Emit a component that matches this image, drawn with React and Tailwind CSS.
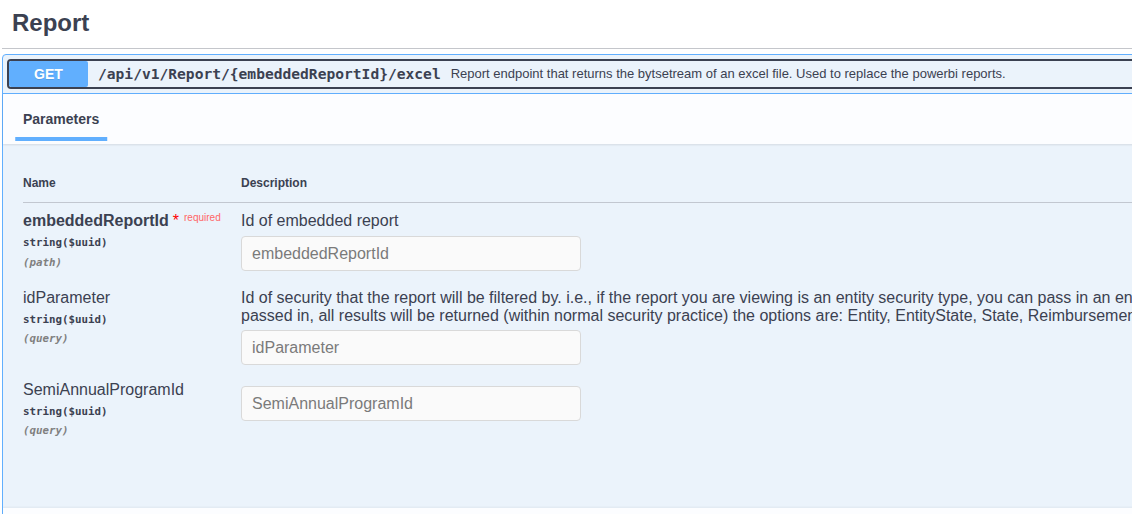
const sans = { fontFamily: '"Liberation Sans", Arial, sans-serif' };
const mono = { fontFamily: '"DejaVu Sans Mono", "Liberation Mono", monospace' };

const params = [
  {
    name: 'embeddedReportId',
    required: true,
    type: 'string($uuid)',
    location: '(path)',
    description: ['Id of embedded report'],
  },
  {
    name: 'idParameter',
    type: 'string($uuid)',
    location: '(query)',
    description: [
      'Id of security that the report will be filtered by. i.e., if the report you are viewing is an entity security type, you can pass in an entity id. If no id is',
      'passed in, all results will be returned (within normal security practice) the options are: Entity, EntityState, State, Reimbursement, Program',
    ],
  },
  {
    name: 'SemiAnnualProgramId',
    type: 'string($uuid)',
    location: '(query)',
    description: [],
  },
];

const rowTop = ['pt-[9px]', 'pt-[18px]', 'pt-[16px]'];

const ParamRow = ({ param, index }) => (
  <div className={`flex ${rowTop[index]}`}>
    <div className="w-[218px] shrink-0">
      <div className="flex items-start h-[18px]">
        <span
          className={`text-[16px] leading-[18px] text-[#3b4151] ${param.required ? 'font-bold' : ''}`}
          style={sans}
        >
          {param.name}
        </span>
        {param.required && (
          <>
            <span className="text-[16px] leading-[18px] text-[#ff0000] ml-[4px]" style={sans}>*</span>
            <span className="text-[10px] leading-[12px] text-[#ff6666] ml-[5px]" style={sans}>
              required
            </span>
          </>
        )}
      </div>
      <div className="mt-[5px] text-[10.8px] leading-[16px] font-bold text-[#3b4151]" style={mono}>
        {param.type}
      </div>
      <div
        className={`${index === 0 ? 'mt-[4px]' : 'mt-[3px]'} text-[10.8px] leading-[16px] font-bold italic text-[#808080]`}
        style={mono}
      >
        {param.location}
      </div>
    </div>
    <div className={`flex-1 ${param.description.length === 0 ? 'pt-[5px]' : ''}`}>
      {param.description.map((line) => (
        <div key={line} className="text-[16px] leading-[18px] text-[#3b4151] whitespace-nowrap" style={sans}>
          {line}
        </div>
      ))}
      {param.description.length > 0 && <div className={index === 0 ? 'h-[6px]' : 'h-[5px]'} />}
      <input
        placeholder={param.name}
        className="w-[340px] h-[35px] px-[10px] rounded-[4px] border border-[#d9d9d9] bg-[#fafafa] text-[16px] text-[#3b4151] placeholder:text-[#7a7a7a] outline-none"
        style={sans}
      />
    </div>
  </div>
);

export default function App() {
  return (
    <div className="w-[1132px] h-[514px] overflow-hidden bg-white pl-[2px]" style={sans}>
      <div className="w-[1500px]">
        {/* tag header */}
        <div className="h-[49px] box-border border-b border-[#c4c6cb] flex items-center pl-[10px] pb-[3px]">
          <h3 className="text-[24px] font-bold text-[#3b4151]" style={sans}>Report</h3>
        </div>

        {/* operation block */}
        <div className="mt-[5px] border border-[#61affe] rounded-[4px] bg-[#ebf3fb]">
          <div className="p-[4px] border-b border-[#61affe]">
            <div className="h-[30px] border-2 border-[#3b4151] rounded-[4px] flex items-center overflow-hidden">
              <div className="w-[79px] h-[26px] bg-[#61affe] rounded-[2px] flex items-center justify-center text-white text-[14px] font-bold shrink-0 [text-shadow:0_1px_0_rgba(0,0,0,0.1)]">
                GET
              </div>
              <span className="ml-[10px] text-[14.6px] font-bold text-[#3b4151] whitespace-nowrap" style={mono}>
                /api/v1/Report/{'{embeddedReportId}'}/excel
              </span>
              <span className="ml-[10px] text-[13px] text-[#3b4151] whitespace-nowrap" style={sans}>
                Report endpoint that returns the bytsetream of an excel file. Used to replace the powerbi reports.
              </span>
            </div>
          </div>

          {/* tab header */}
          <div className="h-[50px] bg-[#fcfdff] shadow-[0_1px_2px_rgba(0,0,0,0.1)] flex items-center pl-[20px] relative">
            <div className="relative">
              <span className="text-[14px] font-bold text-[#3b4151]">Parameters</span>
              <div className="absolute left-1/2 -translate-x-1/2 w-[120%] h-[4px] bg-[#61affe] top-[30px]" />
            </div>
          </div>

          {/* parameters table */}
          <div className="h-[364px] px-[20px]">
            <div className="pt-[31px] pb-[11px] border-b border-[#c2c7d0] flex text-[12px] leading-[16px] font-bold text-[#3b4151]">
              <div className="w-[218px]">Name</div>
              <div>Description</div>
            </div>
            {params.map((param, i) => (
              <ParamRow key={param.name} param={param} index={i} />
            ))}
          </div>

          <div className="h-[40px] bg-[#fcfdff] shadow-[0_-1px_2px_rgba(0,0,0,0.05)]" />
        </div>
      </div>
    </div>
  );
}
